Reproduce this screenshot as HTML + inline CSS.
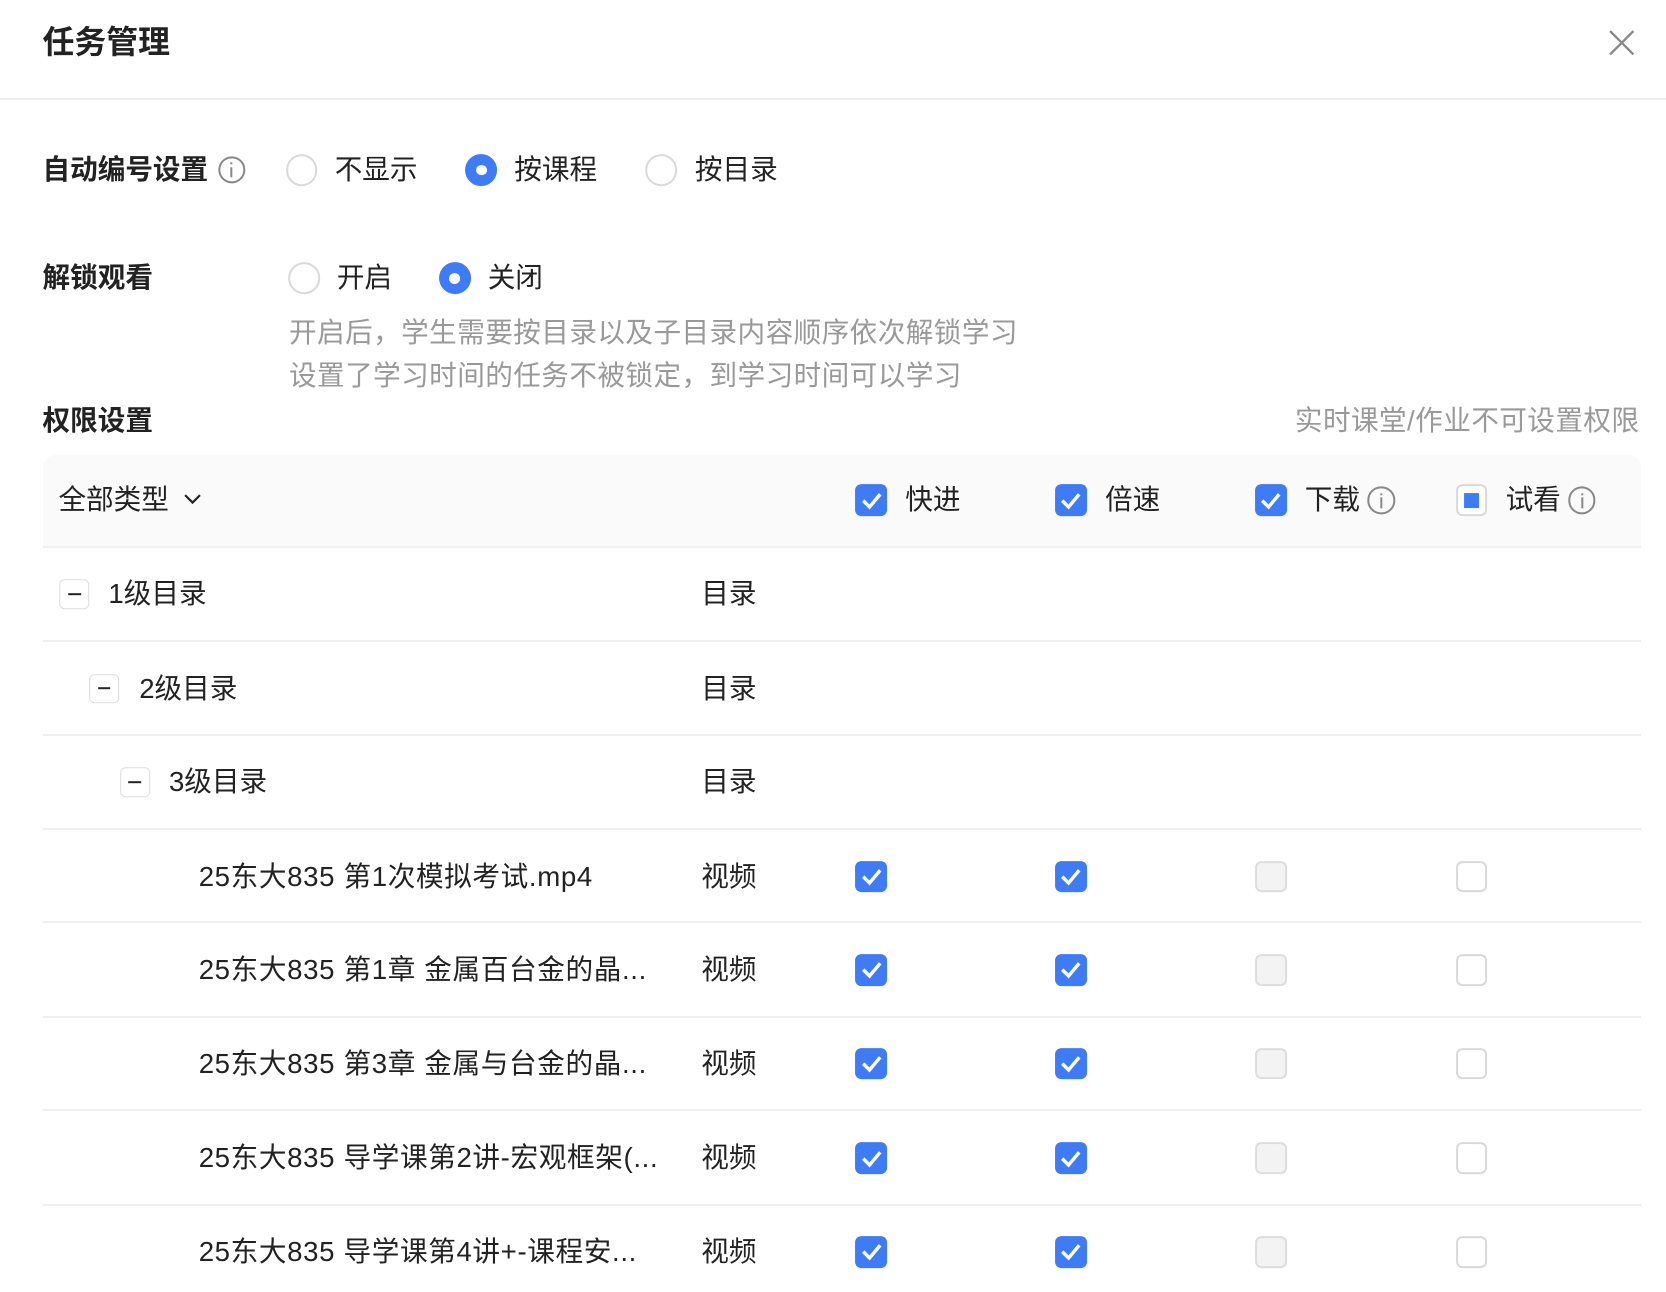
<!DOCTYPE html>
<html><head><meta charset="utf-8"><style>
html,body{margin:0;padding:0;background:#fff;}
body{width:1666px;height:1292px;overflow:hidden;}
#w{zoom:1.0625;width:1568px;height:1216px;position:relative;font-family:"Liberation Sans","Noto Sans CJK SC",sans-serif;color:#222;}
.a{position:absolute;white-space:nowrap;line-height:1;}
.t{font-size:26px;transform:translateY(-50%);}
.n{letter-spacing:0.6px;}
.g{color:#999;font-size:26px;transform:translateY(-50%);letter-spacing:0.4px;}
.b{font-weight:bold;}
.rad{position:absolute;width:26px;height:26px;border:2px solid #d9d9d9;border-radius:50%;transform:translate(-50%,-50%);box-sizing:content-box;}
.rad.on{border:none;width:30px;height:30px;background:#3d7bf7;}
.rad.on:after{content:"";position:absolute;left:10px;top:10px;width:10px;height:10px;border-radius:50%;background:#fff;}
.cb{position:absolute;width:30px;height:30px;border-radius:6px;transform:translate(-50%,-50%);box-sizing:border-box;}
.cb.on{background:#3d7bf7;}
.cb.on svg{position:absolute;left:5px;top:6px;}
.cb.off{border:2px solid #d9d9d9;background:#fff;}
.cb.dis{border:2px solid #ddd;background:#f3f3f3;}
.cb.ind{border:2px solid #d9d9d9;background:#fff;}
.cb.ind:after{content:"";position:absolute;left:6px;top:6px;width:14px;height:14px;background:#3d7bf7;}
.info{position:absolute;width:22px;height:22px;border:2px solid #888;border-radius:50%;transform:translate(-50%,-50%);}
.info:before{content:"";position:absolute;left:10px;top:4px;width:2px;height:2px;background:#888;}
.info:after{content:"";position:absolute;left:10px;top:8px;width:2px;height:10px;background:#888;}
.line{position:absolute;left:40px;width:1504px;height:2px;background:#f0f0f0;}
.mn{position:absolute;width:26px;height:26px;border:1px solid #ddd;border-radius:5px;transform:translate(-50%,-50%);background:#fff;}
.mn:after{content:"";position:absolute;left:7px;top:12px;width:12px;height:2px;background:#222;}
</style></head><body><div id="w">
<div class="a b" style="left:40px;top:40px;font-size:30px;transform:translateY(-50%)">任务管理</div>
<svg class="a" style="left:1514px;top:28px" width="24" height="24" viewBox="0 0 24 24"><path d="M1 1L23 23M23 1L1 23" stroke="#888" stroke-width="2.2"/></svg>
<div style="position:absolute;left:0;top:92px;width:1568px;height:2px;background:#eee"></div>

<div class="a t b" style="left:40px;top:160px;font-size:26px">自动编号设置</div>
<div class="info" style="left:218px;top:160px"></div>
<div class="rad" style="left:284px;top:160px"></div><div class="a t" style="left:315px;top:160px">不显示</div>
<div class="rad on" style="left:453px;top:160px"></div><div class="a t" style="left:484px;top:160px">按课程</div>
<div class="rad" style="left:622px;top:160px"></div><div class="a t" style="left:654px;top:160px">按目录</div>

<div class="a t b" style="left:40px;top:262px;font-size:26px">解锁观看</div>
<div class="rad" style="left:286px;top:262px"></div><div class="a t" style="left:317px;top:262px">开启</div>
<div class="rad on" style="left:428px;top:262px"></div><div class="a t" style="left:459px;top:262px">关闭</div>
<div class="a g" style="left:272px;top:313px">开启后，学生需要按目录以及子目录内容顺序依次解锁学习</div>
<div class="a g" style="left:272px;top:354px">设置了学习时间的任务不被锁定，到学习时间可以学习</div>

<div class="a t b" style="left:40px;top:396px;font-size:26px">权限设置</div>
<div class="a g" style="right:25px;top:396px">实时课堂/作业不可设置权限</div>

<div style="position:absolute;left:40px;top:428px;width:1504px;height:86px;background:#fafafa;border-radius:12px 12px 0 0"></div>
<div class="line" style="top:514px"></div>
<div class="a t" style="left:55px;top:471px">全部类型</div>
<svg class="a" style="left:172px;top:464px" width="18" height="12" viewBox="0 0 18 12"><path d="M2 2L9 9L16 2" stroke="#222" stroke-width="2" fill="none"/></svg>

<div id="hdr"></div>

<div class="mn" style="left:70px;top:559px"></div><div class="a t" style="left:102px;top:559px">1级目录</div><div class="a t" style="left:660px;top:559px">目录</div>
<div class="line" style="top:602px"></div>
<div class="mn" style="left:98px;top:648px"></div><div class="a t" style="left:131px;top:648px">2级目录</div><div class="a t" style="left:660px;top:648px">目录</div>
<div class="line" style="top:691px"></div>
<div class="mn" style="left:127px;top:736px"></div><div class="a t" style="left:159px;top:736px">3级目录</div><div class="a t" style="left:660px;top:736px">目录</div>
<div class="line" style="top:779px"></div>

<div class="a t n" style="left:187px;top:825px">25东大835 第1次模拟考试.mp4</div><div class="a t" style="left:660px;top:825px">视频</div>
<div class="line" style="top:867px"></div>
<div class="a t n" style="left:187px;top:913px">25东大835 第1章 金属百台金的晶...</div><div class="a t" style="left:660px;top:913px">视频</div>
<div class="line" style="top:956px"></div>
<div class="a t n" style="left:187px;top:1001px">25东大835 第3章 金属与台金的晶...</div><div class="a t" style="left:660px;top:1001px">视频</div>
<div class="line" style="top:1044px"></div>
<div class="a t n" style="left:187px;top:1090px">25东大835 导学课第2讲-宏观框架(...</div><div class="a t" style="left:660px;top:1090px">视频</div>
<div class="line" style="top:1133px"></div>
<div class="a t n" style="left:187px;top:1178px">25东大835 导学课第4讲+-课程安...</div><div class="a t" style="left:660px;top:1178px">视频</div>

<script>
var ck='<svg width="20" height="18" viewBox="0 0 20 18"><path d="M2 9L8 15L18 3" stroke="#fff" stroke-width="3.2" fill="none"/></svg>';
var h='';
function cb(x,y,c){h+='<div class="cb '+c+'" style="left:'+x+'px;top:'+y+'px">'+(c=='on'?ck:'')+'</div>';}
cb(820,471,'on');cb(1008,471,'on');cb(1196,471,'on');cb(1385,471,'ind');
h+='<div class="a t" style="left:852px;top:471px">快进</div><div class="a t" style="left:1040px;top:471px">倍速</div><div class="a t" style="left:1228px;top:471px">下载</div><div class="a t" style="left:1417px;top:471px">试看</div>';
h+='<div class="info" style="left:1300px;top:471px"></div><div class="info" style="left:1489px;top:471px"></div>';
[825,913,1001,1090,1178].forEach(function(y){cb(820,y,'on');cb(1008,y,'on');cb(1196,y,'dis');cb(1385,y,'off');});
document.getElementById('hdr').outerHTML=h;
</script>
</div></body></html>
